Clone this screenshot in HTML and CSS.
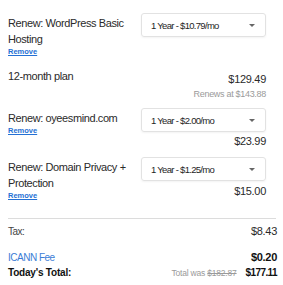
FILE: index.html
```html
<!DOCTYPE html>
<html lang="en">
<head>
    <meta charset="UTF-8">
    <meta name="viewport" content="width=device-width, initial-scale=1.0">
    <title>Cart Summary</title>
    <link rel="stylesheet" href="styles.css">
</head>
<body>
    <div class="cart">
        <div class="item item-first">
            <div class="item-head">
                <div class="item-info">
                    <div class="item-name">Renew: WordPress Basic Hosting</div>
                    <a href="#" class="remove">Remove</a>
                </div>
                <div class="item-side">
                    <div class="select">
                        <span>1 Year - $10.79/mo</span>
                        <span class="caret"></span>
                    </div>
                </div>
            </div>
            <div class="plan-row">
                <div class="plan">12-month plan</div>
                <div class="plan-price">
                    <div class="price">$129.49</div>
                    <div class="renews">Renews at $143.88</div>
                </div>
            </div>
        </div>

        <div class="item">
            <div class="item-head">
                <div class="item-info">
                    <div class="item-name">Renew: oyeesmind.com</div>
                    <a href="#" class="remove">Remove</a>
                </div>
                <div class="item-side">
                    <div class="select">
                        <span>1 Year - $2.00/mo</span>
                        <span class="caret"></span>
                    </div>
                    <div class="price">$23.99</div>
                </div>
            </div>
        </div>

        <div class="item">
            <div class="item-head">
                <div class="item-info">
                    <div class="item-name">Renew: Domain Privacy + Protection</div>
                    <a href="#" class="remove">Remove</a>
                </div>
                <div class="item-side">
                    <div class="select">
                        <span>1 Year - $1.25/mo</span>
                        <span class="caret"></span>
                    </div>
                    <div class="price price-low">$15.00</div>
                </div>
            </div>
        </div>

        <div class="divider"></div>

        <div class="totals">
            <div class="total-row tax-row">
                <span class="label">Tax:</span>
                <span class="amount">$8.43</span>
            </div>
            <div class="total-row fee-row">
                <a href="#" class="label fee">ICANN Fee</a>
                <span class="amount strong">$0.20</span>
            </div>
            <div class="total-row grand-row">
                <span class="label grand">Today's Total:</span>
                <span class="grand-amount">
                    <span class="was">Total was <s>$182.87</s></span>
                    <span class="amount strong tight">$177.11</span>
                </span>
            </div>
        </div>
    </div>
</body>
</html>
```

FILE: styles.css
```css
:root {
    --text-color: #2a2a2a;
    --muted-color: #9a9a9a;
    --link-color: #2470d4;
    --fee-color: #3b7dd6;
    --border-color: #e2e2e2;
}
* {
    margin: 0;
    padding: 0;
    box-sizing: border-box;
}
body {
    font-family: "Liberation Sans", Arial, sans-serif;
    color: var(--text-color);
    background-color: #ffffff;
    padding: 13px 6px 0 8px;
}
.cart {
    width: 269px;
}
.item {
    padding-right: 11px;
    margin-top: 8px;
}
.item-first {
    margin-top: 0;
}
.item-head {
    display: flex;
    justify-content: space-between;
    align-items: flex-start;
}
.item-info {
    width: 128px;
    padding-top: 2px;
}
.item-name {
    font-size: 11px;
    line-height: 16px;
    letter-spacing: -0.4px;
}
.remove {
    display: block;
    font-size: 7.5px;
    line-height: 9px;
    font-weight: 700;
    color: var(--link-color);
    text-decoration: underline;
}
.item-side {
    width: 125px;
    display: flex;
    flex-direction: column;
    align-items: flex-end;
}
.select {
    width: 125px;
    height: 24px;
    border: 1px solid var(--border-color);
    border-radius: 3px;
    box-shadow: 0 1px 2px rgba(0,0,0,0.05);
    display: flex;
    align-items: center;
    justify-content: space-between;
    padding: 0 10px 0 9px;
    font-size: 9.5px;
    letter-spacing: -0.7px;
    color: #1e1e1e;
}
.caret {
    width: 0;
    height: 0;
    border-left: 3.5px solid transparent;
    border-right: 3.5px solid transparent;
    border-top: 3.5px solid #666;
}
.price {
    font-size: 11px;
    line-height: 16px;
    letter-spacing: -0.3px;
    margin-top: 1px;
}
.price-low {
    margin-top: 2px;
}
.plan-row {
    display: flex;
    justify-content: space-between;
    align-items: flex-start;
    margin-top: 12px;
}
.plan {
    font-size: 11px;
    line-height: 16px;
    letter-spacing: -0.4px;
}
.plan-price {
    text-align: right;
    padding-top: 3px;
}
.plan-price .price {
    margin-top: 0;
}
.renews {
    font-size: 9px;
    line-height: 12px;
    letter-spacing: -0.3px;
    color: var(--muted-color);
    margin-top: 1px;
}
.divider {
    height: 1px;
    background-color: #dcdcdc;
    margin-top: 18px;
    width: 268px;
}
.totals {
    padding-top: 5px;
}
.total-row {
    display: flex;
    justify-content: space-between;
    align-items: baseline;
    line-height: 14px;
}
.tax-row {
    margin-bottom: 11px;
}
.fee-row {
    margin-bottom: 1px;
}
.label {
    font-size: 10px;
    letter-spacing: -0.5px;
    color: #444;
}
.fee {
    color: var(--fee-color);
    text-decoration: none;
}
.grand {
    font-weight: 700;
    letter-spacing: -0.2px;
    color: #111;
}
.amount {
    font-size: 11px;
    letter-spacing: -0.3px;
}
.strong {
    font-weight: 700;
    color: #111;
}
.tight {
    font-size: 10px;
    letter-spacing: -0.6px;
}
.grand-amount {
    display: flex;
    align-items: baseline;
    gap: 9px;
}
.was {
    font-size: 8.5px;
    letter-spacing: -0.2px;
    color: var(--muted-color);
}
.was s {
    color: var(--muted-color);
}
```
